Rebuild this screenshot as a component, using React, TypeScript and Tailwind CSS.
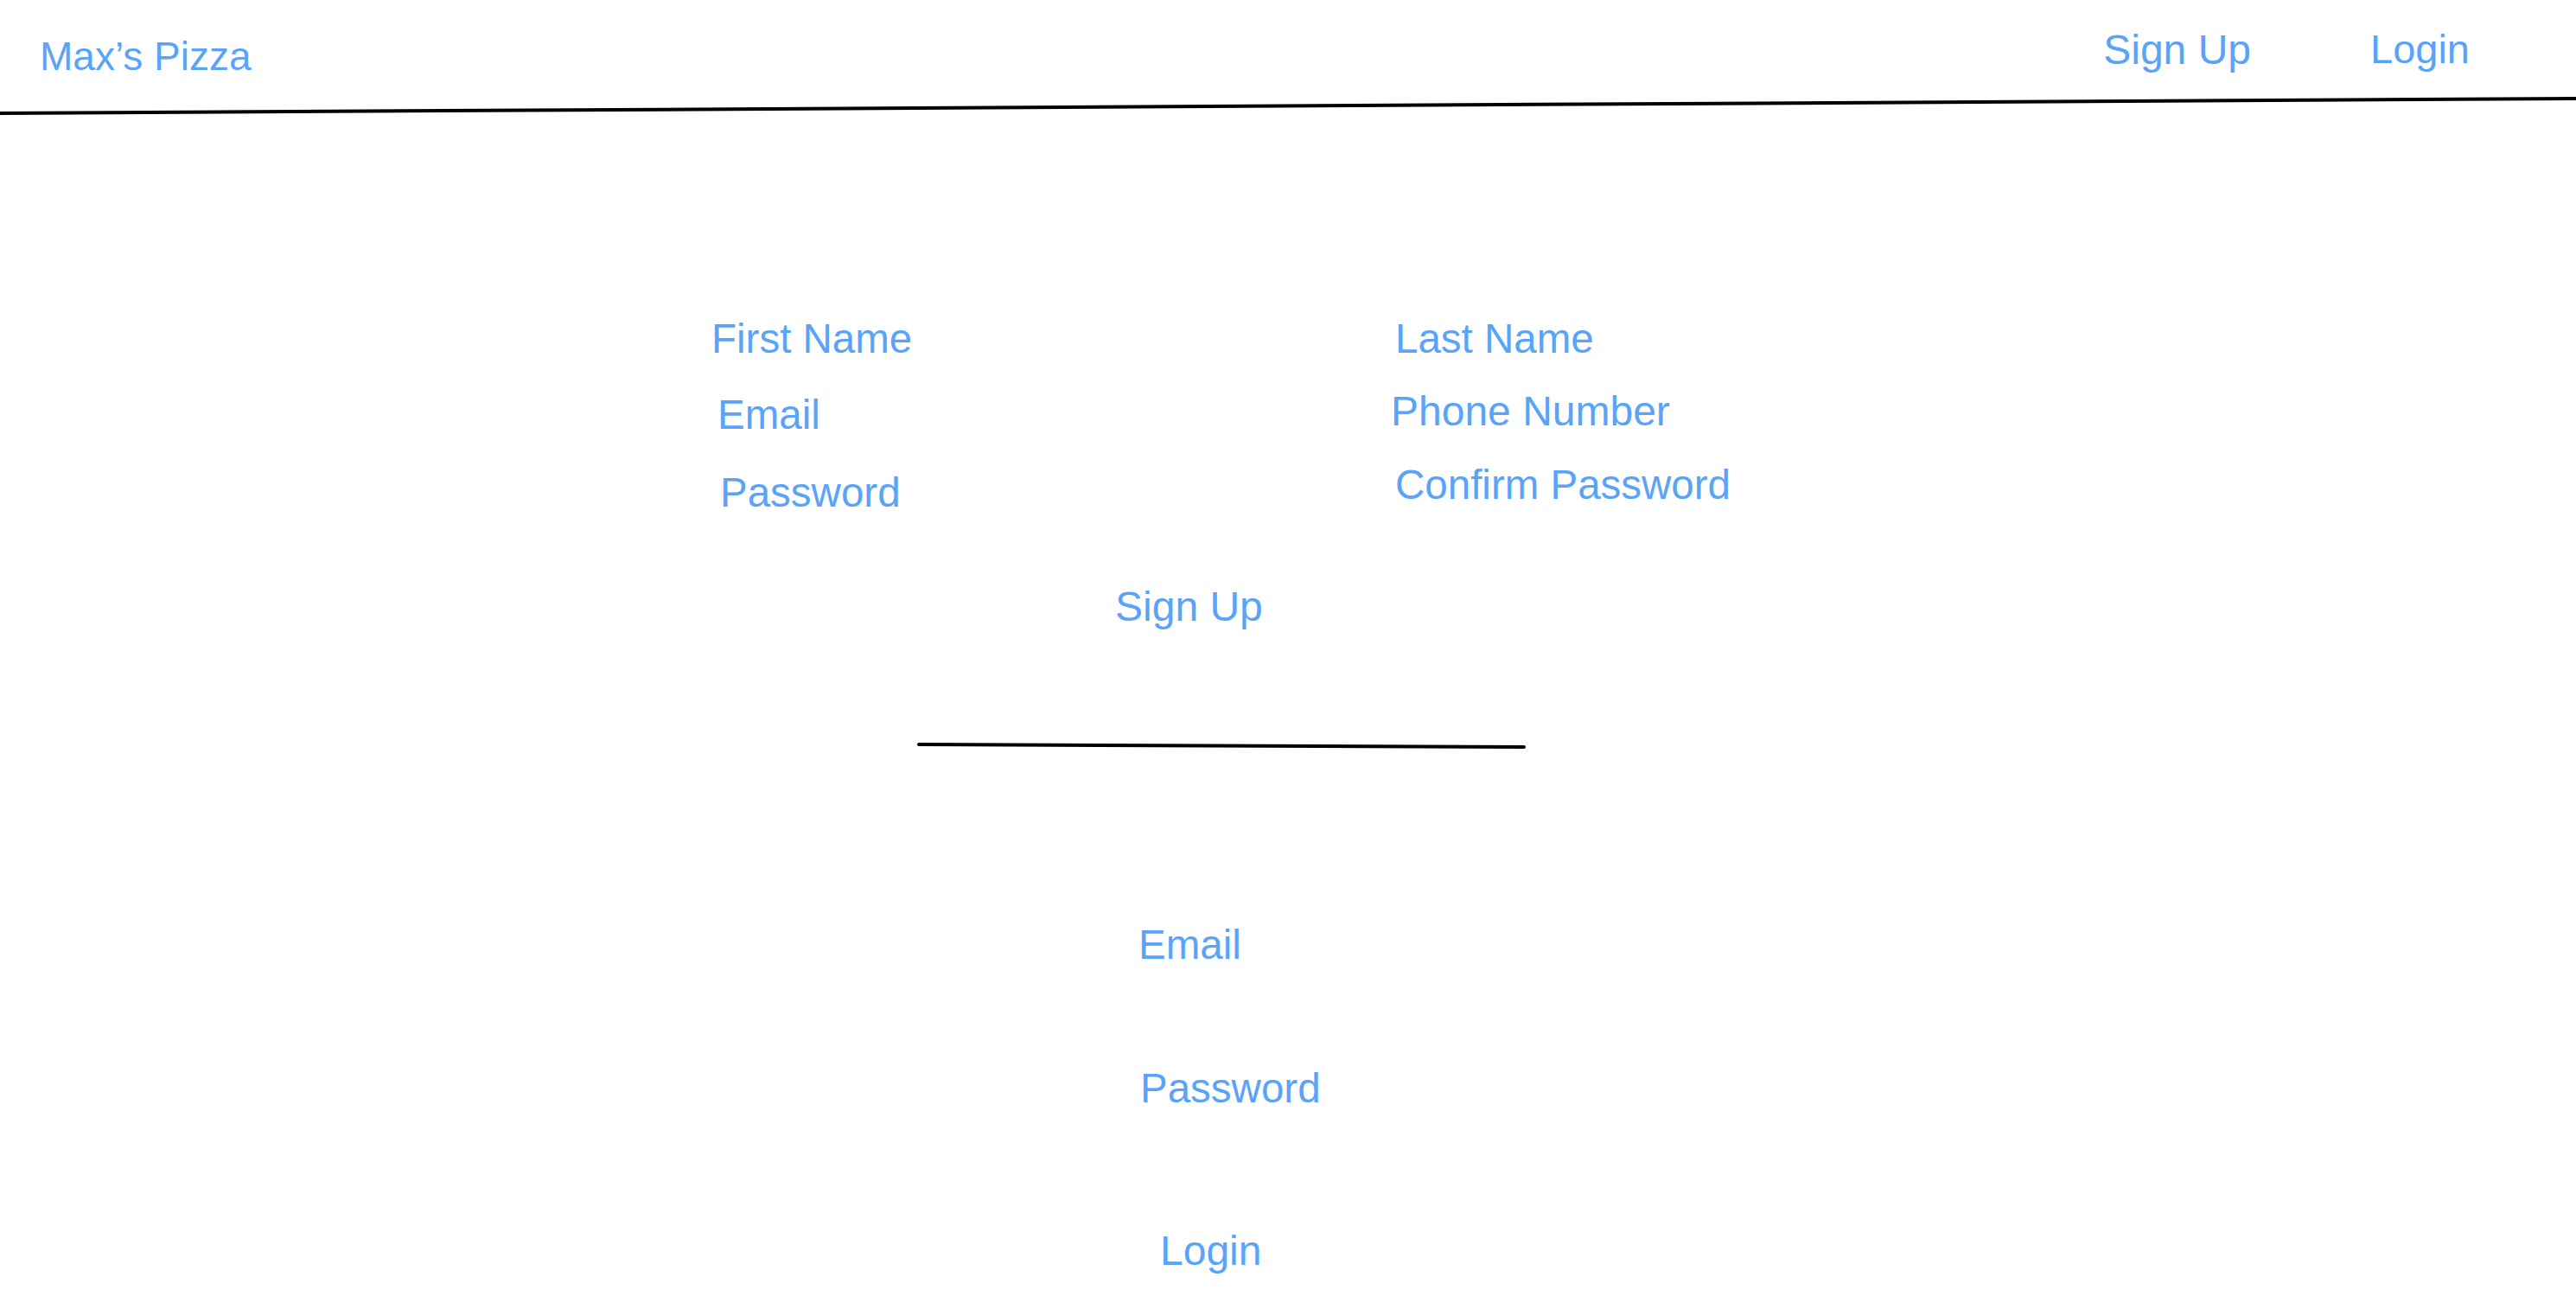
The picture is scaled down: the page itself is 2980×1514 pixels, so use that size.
const font = { fontFamily: '"Liberation Sans", Arial, sans-serif' };

function Label({ children, className = "" }: { children: React.ReactNode; className?: string }) {
  return <div className={`block w-fit leading-none text-[#59a3f9] ${className}`}>{children}</div>;
}

export default function App() {
  return (
    <div className="min-h-screen w-full bg-white" style={font}>
      {/* Top bar */}
      <header className="flex items-start justify-between pl-[46px] pr-[123px] pt-[33px]">
        <Label className="mt-[9px] text-[46px]">Max’s Pizza</Label>
        <nav className="flex items-start gap-[138px]">
          <Label className="mt-[1px] text-[48px]">Sign Up</Label>
          <Label className="text-[47px]">Login</Label>
        </nav>
      </header>
      <svg className="mt-[24px] block h-[24px] w-full" viewBox="0 0 2980 24" preserveAspectRatio="none">
        <line x1="0" y1="19" x2="2980" y2="2" stroke="#000" strokeWidth="4" vectorEffect="non-scaling-stroke" />
      </svg>

      <main className="mx-auto w-[1330px]">
        {/* Sign up form */}
        <div className="mt-[232px] grid grid-cols-[786px_1fr] text-[47.5px]">
          <div className="flex flex-col">
            <Label className="-ml-[2px]">First Name</Label>
            <Label className="ml-[5px] mt-[40px]">Email</Label>
            <Label className="ml-[8px] mt-[43px]">Password</Label>
          </div>
          <div className="flex flex-col">
            <Label className="ml-[3px]">Last Name</Label>
            <Label className="-ml-[2px] mt-[36px] text-[48px]">Phone Number</Label>
            <Label className="ml-[3px] mt-[37px]">Confirm Password</Label>
          </div>
        </div>
        <Label className="ml-[465px] mt-[84px] text-[48px]">Sign Up</Label>

        <svg className="ml-[236px] mt-[131px] block h-[12px] w-[704px]" viewBox="0 0 704 12">
          <line x1="2" y1="4" x2="702" y2="7" stroke="#000" strokeWidth="4" strokeLinecap="round" />
        </svg>

        {/* Login form */}
        <div className="flex flex-col text-[47.5px]">
          <Label className="ml-[492px] mt-[200px]">Email</Label>
          <Label className="ml-[494px] mt-[119px]">Password</Label>
          <Label className="ml-[517px] mt-[140px] text-[48px]">Login</Label>
        </div>
      </main>
    </div>
  );
}
